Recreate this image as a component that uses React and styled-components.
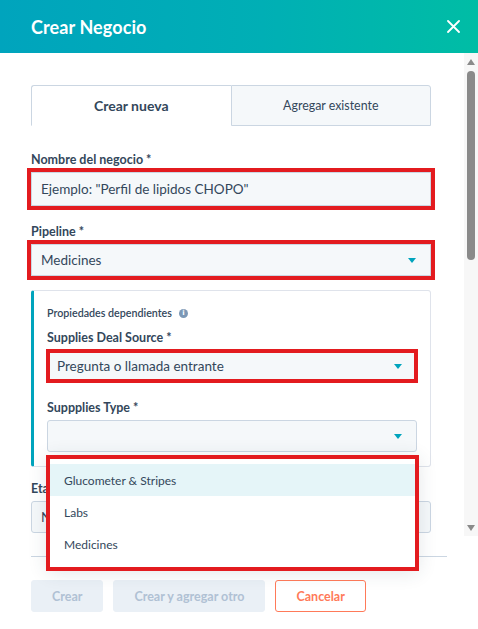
import React from "react";
import styled, { createGlobalStyle } from "styled-components";

const GlobalStyle = createGlobalStyle`
  * { box-sizing: border-box; }
  html, body { margin: 0; padding: 0; background: #fff; }
  body { font-family: "Lato", "Noto Sans", sans-serif; color: #33475b; }
`;

const Panel = styled.div`
  position: relative;
  width: 478px;
  height: 629px;
  display: flex;
  flex-direction: column;
  background: #fff;
  overflow: hidden;
`;

const Header = styled.header`
  flex: 0 0 53px;
  display: flex;
  align-items: center;
  justify-content: space-between;
  padding: 0 18px 0 31px;
  background: linear-gradient(90deg, #00a4bd 0%, #00afb5 55%, #00bda5 100%);
  color: #fff;
  h1 {
    margin: 0;
    font-size: 18px;
    font-weight: 700;
    letter-spacing: 0.1px;
  }
`;

const CloseButton = styled.button`
  border: 0;
  padding: 0;
  background: none;
  width: 13px;
  height: 13px;
  display: flex;
  cursor: pointer;
`;

const Main = styled.div`
  flex: 1;
  min-height: 0;
  display: flex;
`;

const Body = styled.div`
  flex: 1;
  overflow: hidden;
  padding: 32px 33px 0 31px;
`;

const ScrollRail = styled.div`
  flex: 0 0 14px;
  display: flex;
  flex-direction: column;
  align-items: center;
  padding: 6px 0 5px;
  background: #f7f7f7;
`;

const Arrow = styled.span`
  width: 0;
  height: 0;
  border-left: 4px solid transparent;
  border-right: 4px solid transparent;
  ${(p) => (p.$down ? "border-top" : "border-bottom")}: 6px solid #8a8a8a;
`;

const Thumb = styled.div`
  width: 8px;
  height: ${(p) => p.$size}px;
  margin-top: 6px;
  border-radius: 4px;
  background: #8a8a8a;
`;

const RailSpacer = styled.div`
  flex: 1;
`;

const Tabs = styled.div`
  display: flex;
  margin-bottom: 26px;
`;

const Tab = styled.div`
  flex: 1;
  height: 41px;
  display: flex;
  align-items: center;
  justify-content: center;
  color: #33475b;
  border: 1px solid #cbd6e2;
  border-bottom-color: ${(p) => (p.$active ? "transparent" : "#cbd6e2")};
  border-right-width: ${(p) => (p.$active ? 0 : 1)}px;
  background: ${(p) => (p.$active ? "#fff" : "#f5f8fa")};
  font-size: ${(p) => (p.$active ? 14 : 12.4)}px;
  font-weight: ${(p) => (p.$active ? 700 : 400)};
  border-radius: ${(p) => (p.$active ? "3px 0 0 0" : "0 3px 0 0")};
`;

const Field = styled.div`
  margin-bottom: ${(p) => p.$gap ?? 18}px;
`;

const Label = styled.div`
  font-size: 12.5px;
  line-height: 16px;
  font-weight: 700;
  color: #33475b;
  margin-bottom: 4px;
`;

const Control = styled.div`
  position: relative;
  height: ${(p) => p.$h ?? 32}px;
  display: flex;
  align-items: center;
  padding: 0 30px 0 9px;
  background: #f5f8fa;
  border: 1px solid #cbd6e2;
  border-radius: ${(p) => (p.$marked ? 0 : 3)}px;
  font-size: 13.5px;
  color: #33475b;
  outline: ${(p) => (p.$marked ? "4px solid #e31b1f" : "none")};
  outline-offset: ${(p) => p.$offset ?? 0}px;
`;

const Caret = styled.span`
  position: absolute;
  right: 14px;
  top: 50%;
  margin-top: -2px;
  width: 0;
  height: 0;
  border-left: 4.5px solid transparent;
  border-right: 4.5px solid transparent;
  border-top: 5px solid #00a4bd;
`;

const DependentBox = styled.div`
  border: 1px solid #dfe3eb;
  border-left: 3px solid #00a4bd;
  border-radius: 3px;
  padding: 15px 13px 14px 13px;
  margin-bottom: 14px;
`;

const BoxTitle = styled.div`
  display: flex;
  align-items: center;
  gap: 7px;
  font-size: 10.7px;
  line-height: 14px;
  font-weight: 600;
  color: #33475b;
  margin-bottom: 10px;
`;

const InfoDot = styled.span`
  width: 9px;
  height: 9px;
  border-radius: 50%;
  background: #7c98b6;
  color: #fff;
  font-size: 7px;
  font-weight: 700;
  line-height: 9px;
  text-align: center;
  font-family: "DejaVu Sans", sans-serif;
`;

const Menu = styled.ul`
  position: absolute;
  top: 456px;
  left: 47px;
  width: 371px;
  margin: 0;
  padding: 8px 0 10px;
  list-style: none;
  background: #fff;
  box-shadow: 0 2px 18px rgba(45, 62, 80, 0.14);
  outline: 4px solid #e31b1f;
  outline-offset: -3px;
  z-index: 5;
`;

const MenuItem = styled.li`
  height: 32px;
  display: flex;
  align-items: center;
  padding-left: 17px;
  font-size: 12px;
  color: #33475b;
  background: ${(p) => (p.$hover ? "#e5f5f8" : "transparent")};
`;

const Footer = styled.footer`
  flex: 0 0 93px;
  padding: 20px 31px 0;
`;

const Actions = styled.div`
  display: flex;
  gap: 10px;
  border-top: 1px solid #cbd6e2;
  padding-top: 23px;
`;

const Button = styled.button`
  height: 32px;
  padding: 0 20px;
  border-radius: 3px;
  font-family: inherit;
  font-size: 12.5px;
  font-weight: 700;
  border: 1px solid ${(p) => (p.$variant === "secondary" ? "#ff7a59" : "#eaf0f6")};
  background: ${(p) => (p.$variant === "secondary" ? "#fff" : "#eaf0f6")};
  color: ${(p) => (p.$variant === "secondary" ? "#ff7a59" : "#b0c1d4")};
`;

function Select({ children, marked, offset, height }) {
  return (
    <Control $marked={marked} $offset={offset} $h={height}>
      {children}
      <Caret />
    </Control>
  );
}

export default function App() {
  return (
    <>
      <GlobalStyle />
      <Panel>
        <Header>
          <h1>Crear Negocio</h1>
          <CloseButton aria-label="Cerrar">
            <svg width="13" height="13" viewBox="0 0 13 13">
              <path d="M1 1 L12 12 M12 1 L1 12" stroke="#fff" strokeWidth="1.8" strokeLinecap="round" />
            </svg>
          </CloseButton>
        </Header>

        <Main>
          <Body>
            <Tabs>
              <Tab $active>Crear nueva</Tab>
              <Tab>Agregar existente</Tab>
            </Tabs>

            <Field>
              <Label>Nombre del negocio *</Label>
              <Control $h={34} $marked>Ejemplo: "Perfil de lipidos CHOPO"</Control>
            </Field>

            <Field $gap={14}>
              <Label>Pipeline *</Label>
              <Select marked>Medicines</Select>
            </Field>

            <DependentBox>
              <BoxTitle>
                Propiedades dependientes <InfoDot>i</InfoDot>
              </BoxTitle>
              <Field>
                <Label>Supplies Deal Source *</Label>
                <Select marked offset={-3}>Pregunta o llamada entrante</Select>
              </Field>
              <Field $gap={0}>
                <Label>Suppplies Type *</Label>
                <Select />
              </Field>
            </DependentBox>

            <Field>
              <Label>Etapa del negocio *</Label>
              <Select>Nuevo</Select>
            </Field>
          </Body>

          <ScrollRail>
            <Arrow />
            <Thumb $size={189} />
            <RailSpacer />
            <Arrow $down />
          </ScrollRail>
        </Main>

        <Footer>
          <Actions>
            <Button disabled>Crear</Button>
            <Button disabled>Crear y agregar otro</Button>
            <Button $variant="secondary">Cancelar</Button>
          </Actions>
        </Footer>

        <Menu>
          <MenuItem $hover>Glucometer &amp; Stripes</MenuItem>
          <MenuItem>Labs</MenuItem>
          <MenuItem>Medicines</MenuItem>
        </Menu>
      </Panel>
    </>
  );
}
